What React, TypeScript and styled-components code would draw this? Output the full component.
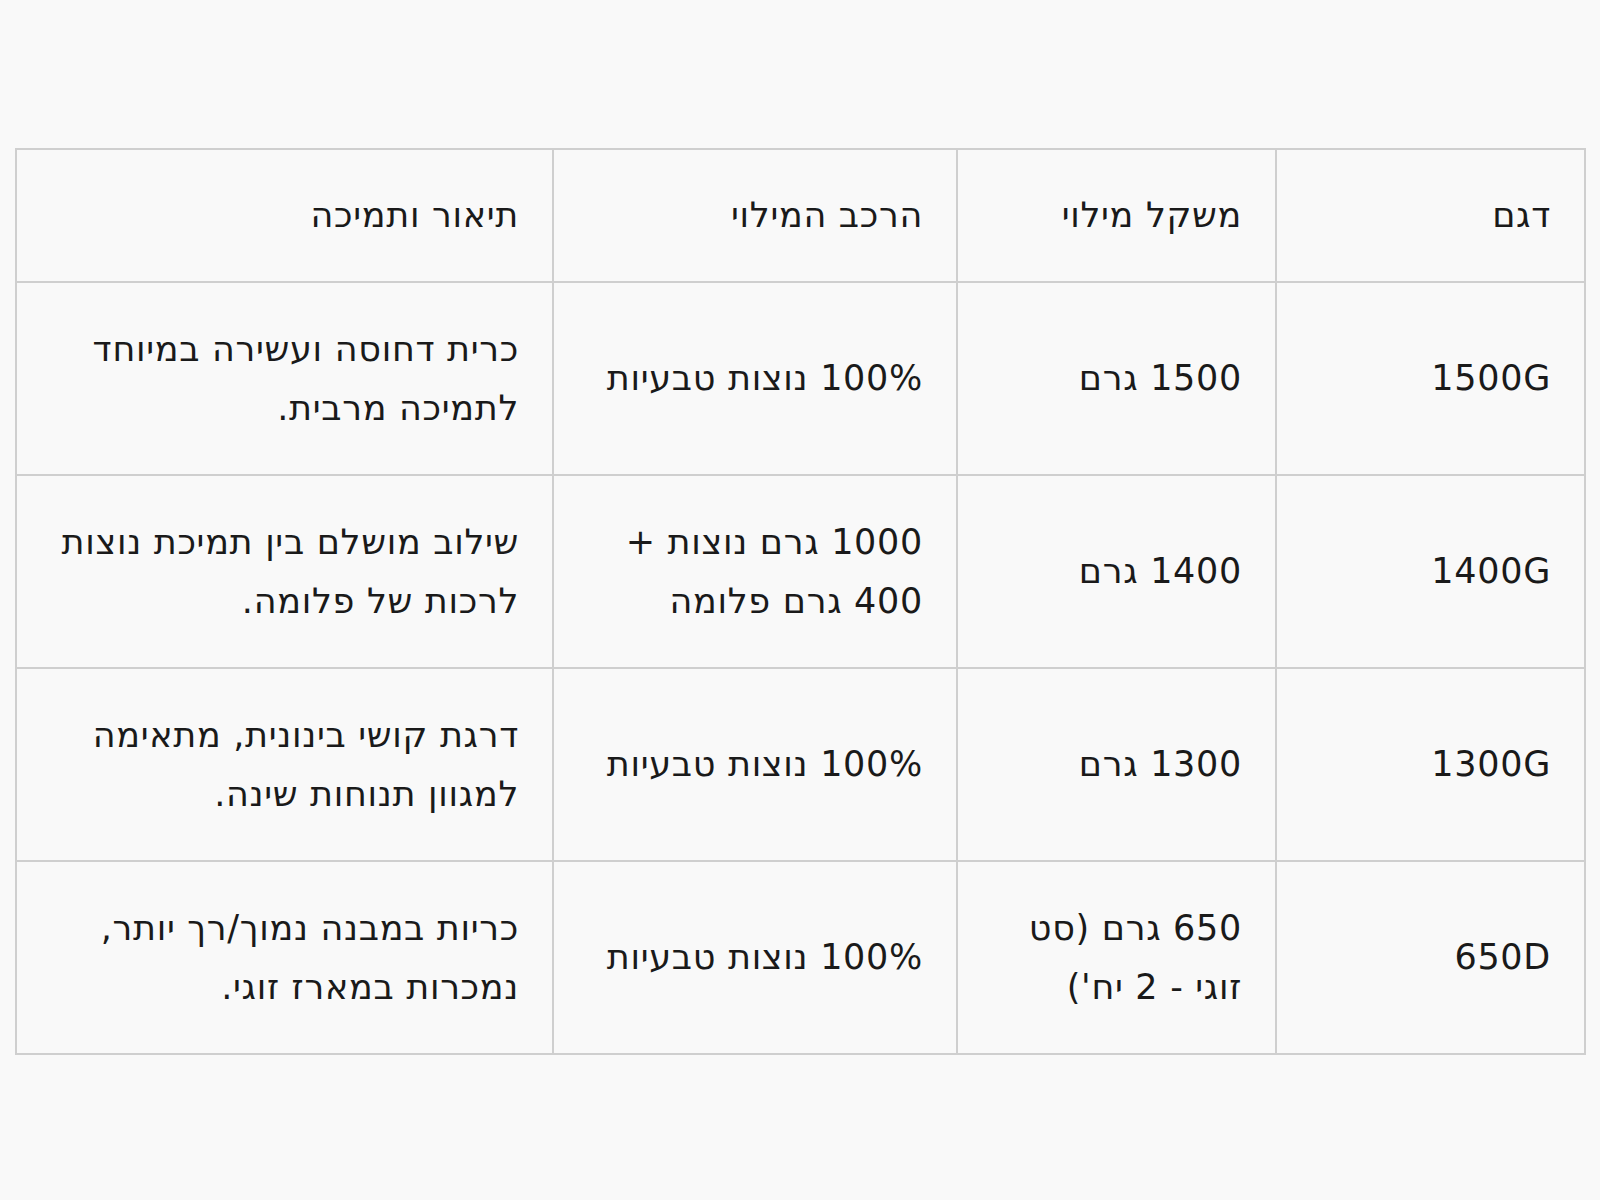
import styled, { createGlobalStyle } from "styled-components";

const GlobalStyle = createGlobalStyle`
  html, body {
    margin: 0;
    padding: 0;
    background: #f9f9f9;
  }
  body {
    font-family: "DejaVu Sans", "Noto Sans", sans-serif;
    color: #1a1a1a;
  }
`;

const Page = styled.div`
  width: 1600px;
  height: 1200px;
  padding: 148px 16px 0 15px;
  box-sizing: border-box;
`;

const Table = styled.table`
  direction: rtl;
  width: 1569px;
  border-collapse: collapse;
  table-layout: fixed;
  border: 2px solid #cfcfcf;
`;

const Col = styled.col<{ $w: number }>`
  width: ${({ $w }) => $w}px;
`;

const Cell = styled.td<{ $head?: boolean }>`
  border: 2px solid #cfcfcf;
  padding: 0 33px;
  height: ${({ $head }) => ($head ? 133 : 193)}px;
  box-sizing: border-box;
  text-align: right;
  vertical-align: middle;
  font-size: 35px;
  letter-spacing: 0.7px;
  line-height: 59px;
  font-weight: 400;
`;

type Row = [string, string, string, string];

const head: Row = ["דגם", "משקל מילוי", "הרכב המילוי", "תיאור ותמיכה"];

const rows: Row[] = [
  ["1500G", "1500 גרם", "100% נוצות טבעיות", "כרית דחוסה ועשירה במיוחד לתמיכה מרבית."],
  ["1400G", "1400 גרם", "1000 גרם נוצות + 400 גרם פלומה", "שילוב מושלם בין תמיכת נוצות לרכות של פלומה."],
  ["1300G", "1300 גרם", "100% נוצות טבעיות", "דרגת קושי בינונית, מתאימה למגוון תנוחות שינה."],
  ["650D", "650 גרם (סט זוגי - 2 יח')", "100% נוצות טבעיות", "כריות במבנה נמוך/רך יותר, נמכרות במארז זוגי."],
];

export default function App() {
  return (
    <>
      <GlobalStyle />
      <Page>
        <Table>
          <colgroup>
            <Col $w={309} />
            <Col $w={319} />
            <Col $w={404} />
            <Col $w={537} />
          </colgroup>
          <thead>
            <tr>
              {head.map((h) => (
                <Cell as="th" $head key={h}>
                  {h}
                </Cell>
              ))}
            </tr>
          </thead>
          <tbody>
            {rows.map((r) => (
              <tr key={r[0]}>
                {r.map((c, i) => (
                  <Cell key={i}>{c}</Cell>
                ))}
              </tr>
            ))}
          </tbody>
        </Table>
      </Page>
    </>
  );
}
